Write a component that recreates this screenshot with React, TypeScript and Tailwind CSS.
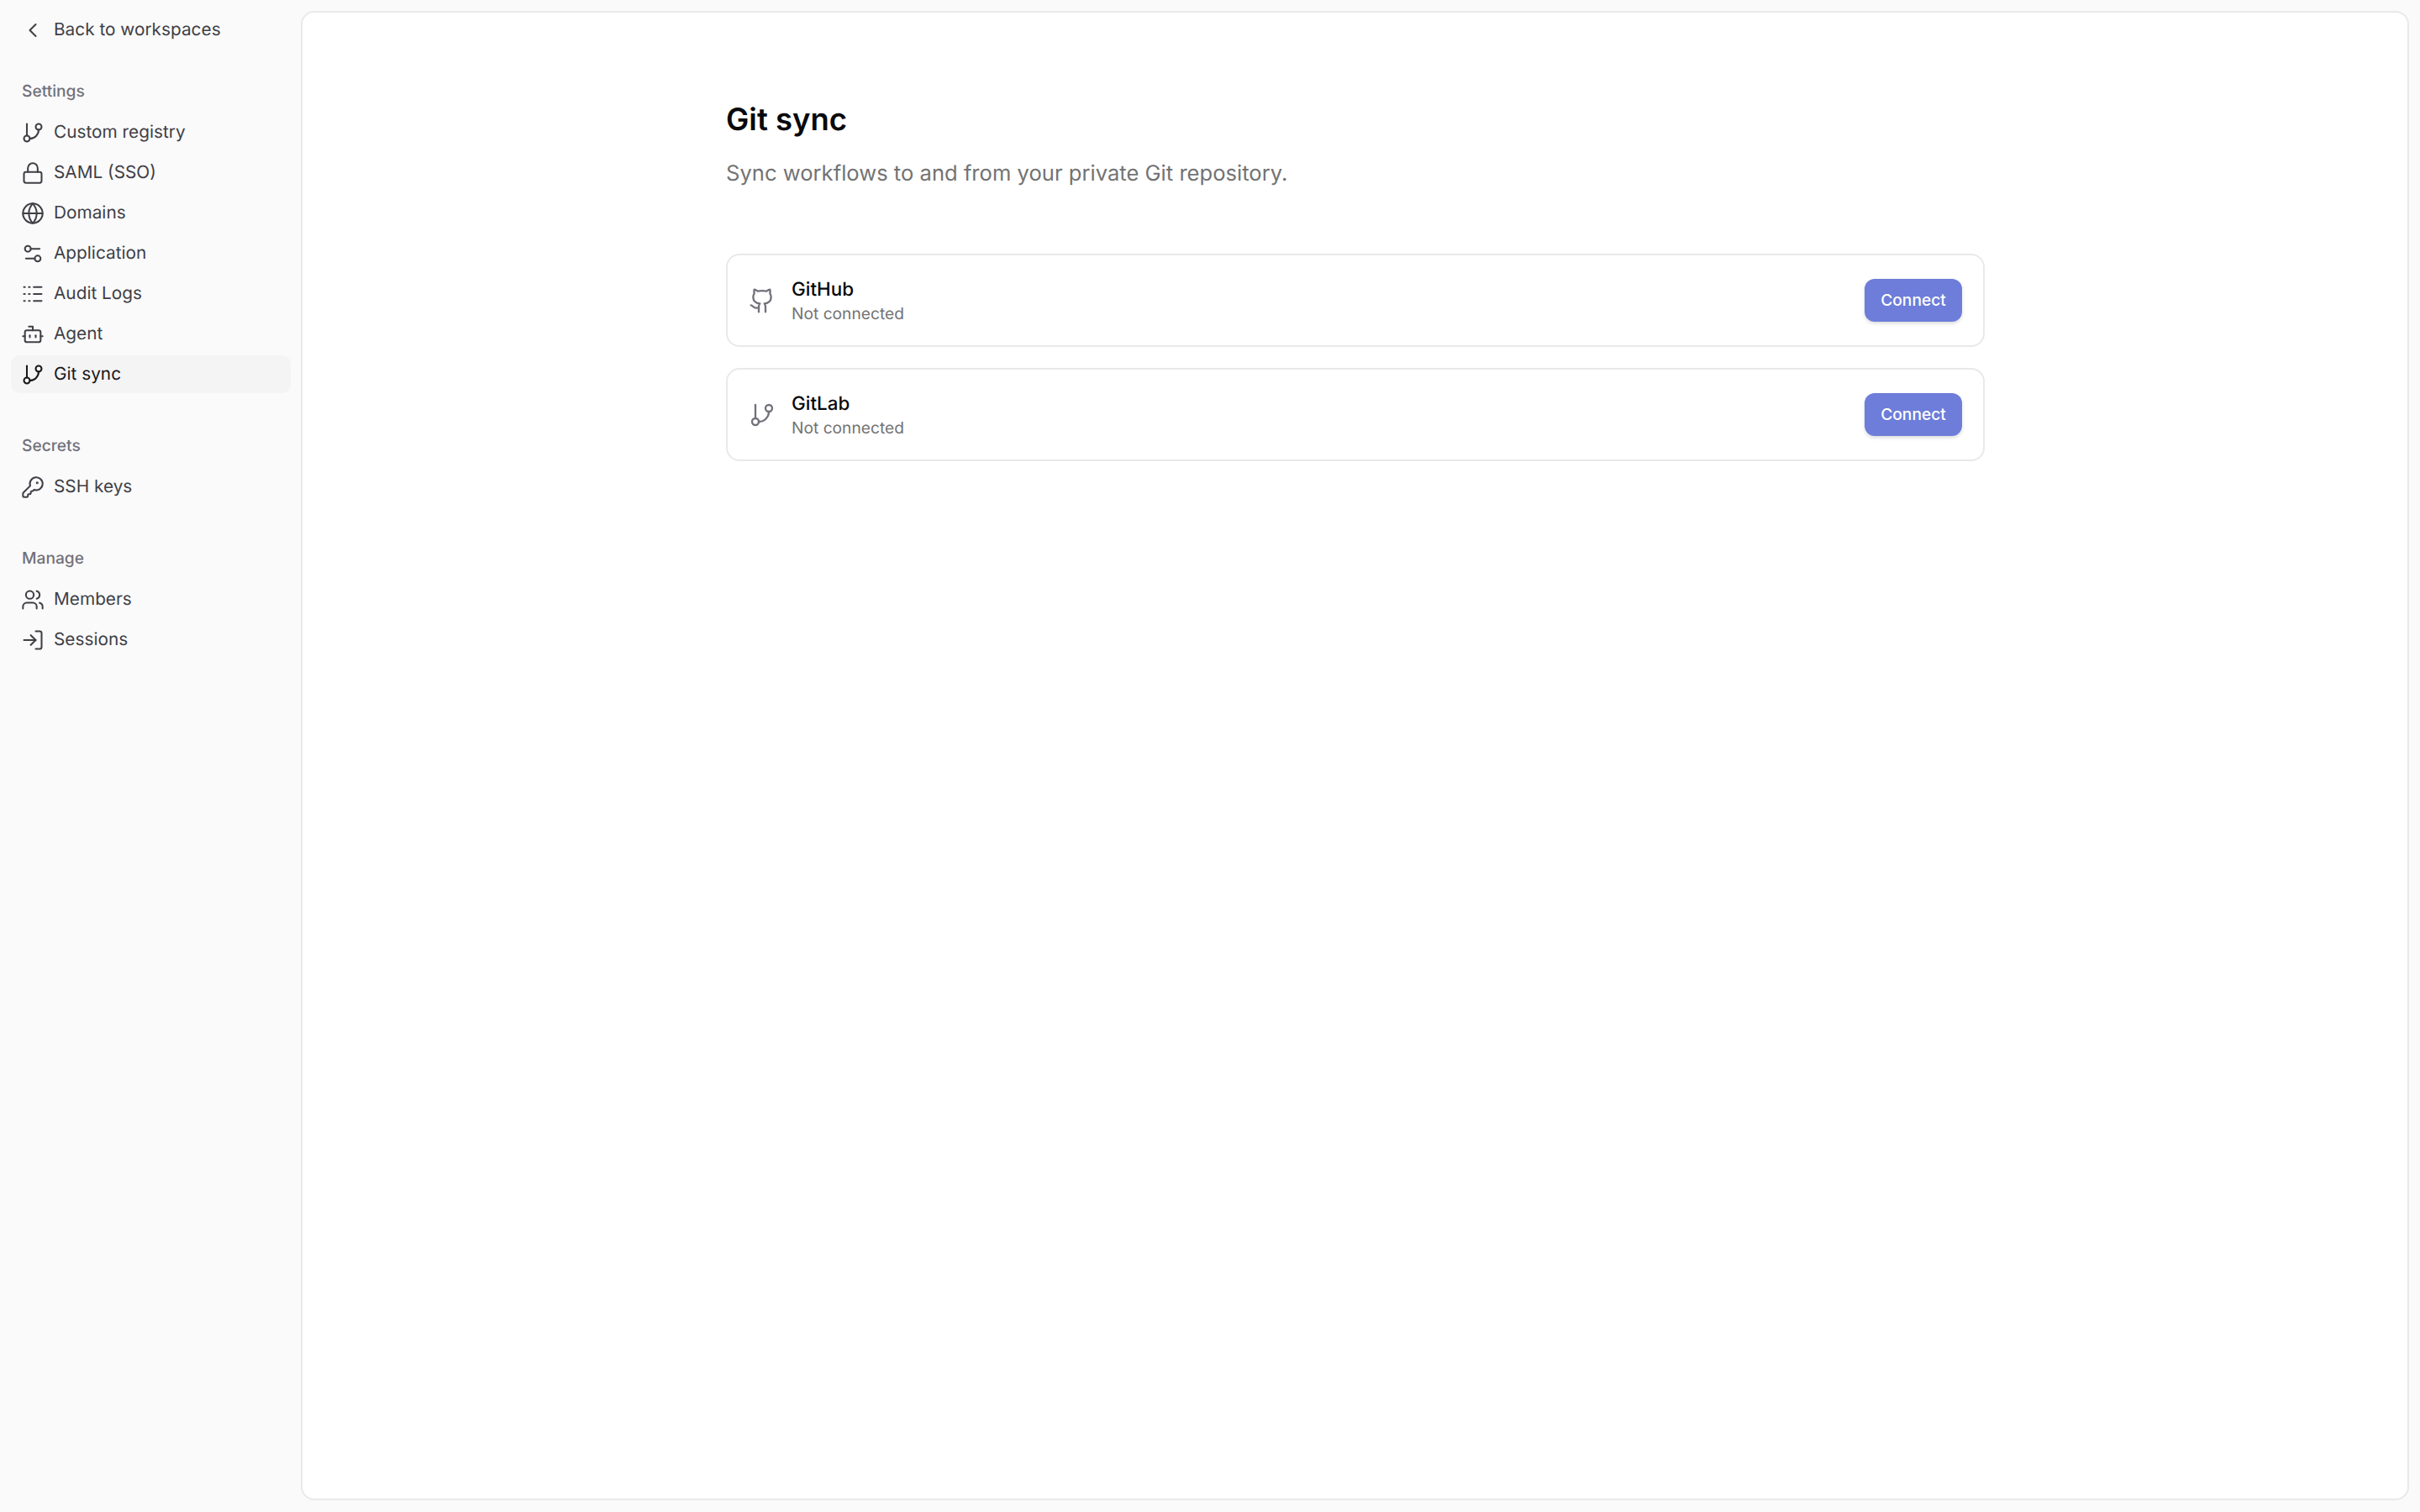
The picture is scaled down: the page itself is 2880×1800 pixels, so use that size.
import { ChevronLeft, GitBranch, Lock, Globe, Settings2, Logs, Bot, KeyRound, Users, LogIn, Github } from "lucide-react";
import type { ComponentType } from "react";

type Item = { label: string; icon: ComponentType<any>; active?: boolean };

const groups: { title: string; cls: string; items: Item[] }[] = [
  {
    title: "Settings",
    cls: "mt-[36px]",
    items: [
      { label: "Custom registry", icon: GitBranch },
      { label: "SAML (SSO)", icon: Lock },
      { label: "Domains", icon: Globe },
      { label: "Application", icon: Settings2 },
      { label: "Audit Logs", icon: Logs },
      { label: "Agent", icon: Bot },
      { label: "Git sync", icon: GitBranch, active: true },
    ],
  },
  { title: "Secrets", cls: "mt-[48px]", items: [{ label: "SSH keys", icon: KeyRound }] },
  {
    title: "Manage",
    cls: "mt-[48px]",
    items: [
      { label: "Members", icon: Users },
      { label: "Sessions", icon: LogIn },
    ],
  },
];

function NavRow({ item }: { item: Item }) {
  const Icon = item.icon;
  return (
    <div
      className={`flex h-[45px] items-center gap-[11px] rounded-[10px] px-[12px] text-[20.8px] ${
        item.active ? "bg-[#f4f4f5] text-[#18181b]" : "text-[#3f3f46]"
      }`}
    >
      <Icon size={28} strokeWidth={1.75} className="shrink-0" />
      <span>{item.label}</span>
    </div>
  );
}

function Provider({ name, icon: Icon }: { name: string; icon: ComponentType<any> }) {
  return (
    <div className="flex h-[111px] items-center justify-between rounded-[16px] border-2 border-[#e9e9eb] bg-white pl-[25px] pr-[25px]">
      <div className="flex items-center gap-[19px]">
        <Icon size={32} strokeWidth={1.75} className="shrink-0 text-[#71717a]" />
        <div className="mt-[2px] flex flex-col">
          <span className="text-[22.4px] leading-[28px] font-medium text-[#09090b]">{name}</span>
          <span className="text-[19.2px] leading-[28px] text-[#737373]">Not connected</span>
        </div>
      </div>
      <button className="h-[51px] w-[116px] rounded-[12px] bg-[#6d7dd9] text-[19.2px] font-medium text-white shadow-[0_2px_4px_rgba(0,0,0,0.15)]">
        Connect
      </button>
    </div>
  );
}

export default function App() {
  return (
    <div className="flex h-[1800px] w-[2880px] bg-[#fafafa] font-['Inter',sans-serif] antialiased [text-rendering:geometricPrecision]">
      <aside className="flex w-[358px] shrink-0 flex-col pl-[13px] pr-[12px] pt-[13px]">
        <div className="flex h-[45px] items-center gap-[11px] px-[12px] text-[20.8px] text-[#3f3f46]">
          <ChevronLeft size={28} strokeWidth={1.75} className="shrink-0" />
          <span>Back to workspaces</span>
        </div>
        {groups.map((g) => (
          <div key={g.title} className={g.cls}>
            <div className="flex h-[28px] items-center px-[13px] text-[19.2px] font-medium text-[#71717a]">{g.title}</div>
            <div className="mt-[13px] flex flex-col gap-[3px]">
              {g.items.map((it) => (
                <NavRow key={it.label} item={it} />
              ))}
            </div>
          </div>
        ))}
      </aside>
      <main className="mb-[14px] mr-[13px] mt-[13px] flex-1 rounded-[16px] border-2 border-[#e9e9eb] bg-white pl-[504px] pt-[99px]">
        <div className="w-[1498px]">
          <h1 className="text-[36.5px] leading-[56px] font-semibold text-[#09090b]">Git sync</h1>
          <p className="mt-[19px] text-[25.6px] leading-[36px] text-[#737373]">
            Sync workflows to and from your private Git repository.
          </p>
          <div className="mt-[77px] flex flex-col gap-[25px]">
            <Provider name="GitHub" icon={Github} />
            <Provider name="GitLab" icon={GitBranch} />
          </div>
        </div>
      </main>
    </div>
  );
}
